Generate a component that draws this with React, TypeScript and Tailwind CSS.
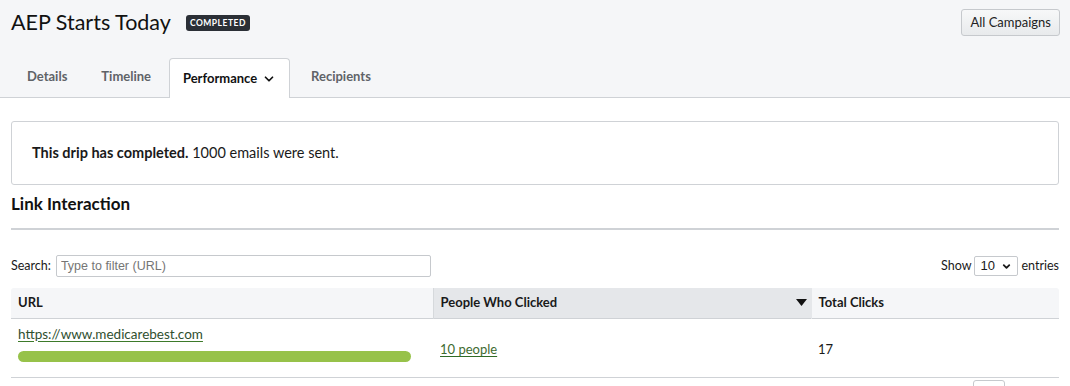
import { ChevronDown } from 'lucide-react';

const tabs = ['Details', 'Timeline', 'Performance', 'Recipients'];

const App = () => {
  return (
    <div className="min-h-[386px] bg-white text-[#1a1a1a] font-['Lato','Liberation_Sans',sans-serif]">
      {/* header */}
      <div className="bg-[#f5f6f8] border-b border-[#cfd2d6]">
        <div className="flex items-start justify-between pl-[11px] pr-[10px] pt-[9px]">
          <div className="flex items-center gap-[15px] pt-[1px]">
            <h1 className="text-[21.5px] leading-[24px] text-[#111]">AEP Starts Today</h1>
            <span className="bg-[#2b2f36] text-white text-[8.5px] font-bold tracking-[0.06em] leading-none px-[4px] py-[3.5px] rounded-[3px] mt-[2px]">
              COMPLETED
            </span>
          </div>
          <button className="h-[27px] px-[8px] text-[13px] text-[#222] border border-[#c6c9cd] rounded-[3px] bg-gradient-to-b from-[#f7f8f9] to-[#e8eaec]">
            All Campaigns
          </button>
        </div>
        <div className="flex items-end pl-[11px] mt-[21px] h-[40px]">
          {tabs.map((t) => {
            const active = t === 'Performance';
            return active ? (
              <div
                key={t}
                className="h-[40px] -mb-px w-[121px] flex items-center justify-center gap-[5px] bg-white border border-b-0 border-[#cfd2d6] rounded-t-[4px] text-[13px] font-bold text-[#111]"
              >
                {t}
                <ChevronDown size={14} strokeWidth={3} />
              </div>
            ) : (
              <div
                key={t}
                className={`h-[40px] flex items-center text-[13px] font-bold text-[#5f6368] ${
                  t === 'Details' ? 'pl-[16px] pr-[17px]' : t === 'Timeline' ? 'pl-[17px] pr-[18px]' : 'pl-[21px] pr-[17px]'
                }`}
              >
                {t}
              </div>
            );
          })}
        </div>
      </div>

      {/* body */}
      <div className="px-[11px] pt-[23px]">
        <div className="border border-[#cfd2d6] rounded-[3px] h-[64px] flex items-center pl-[20px] text-[14.5px]">
          <span>
            <span className="font-bold">This drip has completed.</span> 1000 emails were sent.
          </span>
        </div>

        <h2 className="mt-[9px] text-[17px] font-bold leading-[20px] text-[#111]">Link Interaction</h2>
        <div className="mt-[14px] h-[2px] bg-[#cfd2d6]" />

        <div className="mt-[25px] flex items-center justify-between text-[12.5px]">
          <label className="flex items-center gap-[5px]">
            Search:
            <input
              type="text"
              placeholder="Type to filter (URL)"
              className="w-[375px] h-[22px] border border-[#c6c9cd] rounded-[2px] px-[4px] text-[12.5px] font-['Liberation_Sans',sans-serif] placeholder:text-[#757575] outline-none"
            />
          </label>
          <div className="flex items-center gap-[3px]">
            Show
            <div className="w-[44px] h-[20px] border border-[#c6c9cd] rounded-[2px] flex items-center justify-between px-[5px] text-[13px] font-['Liberation_Sans',sans-serif]">
              10
              <ChevronDown size={11} strokeWidth={4} />
            </div>
            entries
          </div>
        </div>

        <table className="mt-[11px] w-full text-[13px] border-collapse">
          <thead>
            <tr className="h-[30px] border-b border-[#cfd2d6] text-left">
              <th className="bg-[#f5f6f8] font-bold pl-[7px] w-[422px] rounded-tl-[3px]">URL</th>
              <th className="bg-[#e5e7ea] font-bold pl-[7px] w-[378px] border-l border-[#d6d9dc]">
                <div className="flex items-center justify-between pr-[4px]">
                  People Who Clicked
                  <svg width="11" height="7" viewBox="0 0 11 7">
                    <path d="M0 0h11L5.5 7z" fill="#111" />
                  </svg>
                </div>
              </th>
              <th className="bg-[#f5f6f8] font-bold pl-[7px] border-l border-[#e5e7ea] rounded-tr-[3px]">Total Clicks</th>
            </tr>
          </thead>
          <tbody>
            <tr className="h-[59px] border-b border-[#cfd2d6]">
              <td className="pl-[7px] pr-[22px] align-top pt-[5px]">
                <a href="#" className="text-[13.5px] text-[#2f4f2f] underline decoration-[#3d7a2a] underline-offset-[2px]">
                  https://www.medicarebest.com
                </a>
                <div className="mt-[7px] h-[11px] rounded-full bg-[#97c24a]" />
              </td>
              <td className="pl-[7px] pt-[4px]">
                <a href="#" className="text-[#3e6b2f] underline decoration-[#2f6b25] underline-offset-[2px]">
                  10 people
                </a>
              </td>
              <td className="pl-[7px] pt-[4px]">17</td>
            </tr>
          </tbody>
        </table>
        <div className="flex justify-end pr-[54px] mt-[2px]">
          <div className="w-[32px] h-[20px] border border-[#c6c9cd] rounded-[3px]" />
        </div>
      </div>
    </div>
  );
};

export default App;
